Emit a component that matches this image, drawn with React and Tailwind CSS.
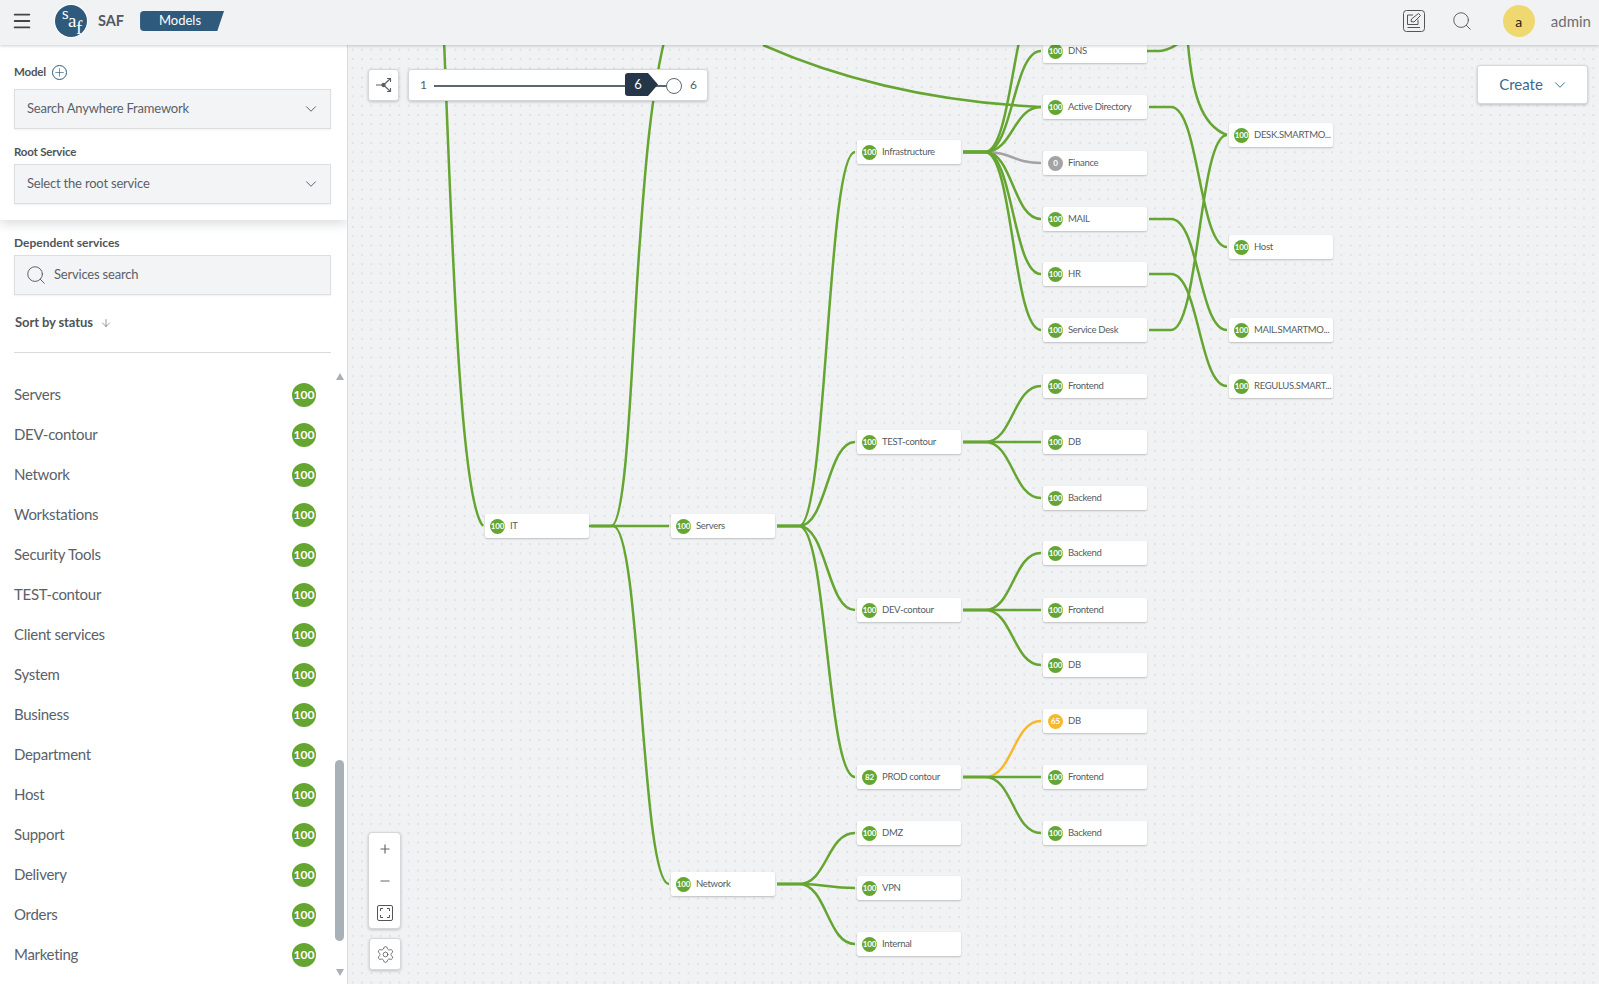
import { Menu, Plus, Minus, ChevronDown, Search, ArrowDown, Settings } from 'lucide-react';

const FONT = "font-['Lato',sans-serif]";

const services = ['Servers', 'DEV-contour', 'Network', 'Workstations', 'Security Tools', 'TEST-contour', 'Client services', 'System', 'Business', 'Department', 'Host', 'Support', 'Delivery', 'Orders', 'Marketing'];

const X = [485, 671, 857, 1043, 1229];
const W = 104;

const nodes = [
  { c: 0, y: 526, label: 'IT' },
  { c: 1, y: 526, label: 'Servers' },
  { c: 1, y: 884, label: 'Network' },
  { c: 2, y: 152, label: 'Infrastructure' },
  { c: 2, y: 442, label: 'TEST-contour' },
  { c: 2, y: 610, label: 'DEV-contour' },
  { c: 2, y: 777, label: 'PROD contour', v: 82 },
  { c: 2, y: 833, label: 'DMZ' },
  { c: 2, y: 888, label: 'VPN' },
  { c: 2, y: 944, label: 'Internal' },
  { c: 3, y: 51, label: 'DNS' },
  { c: 3, y: 107, label: 'Active Directory' },
  { c: 3, y: 163, label: 'Finance', v: 0 },
  { c: 3, y: 219, label: 'MAIL' },
  { c: 3, y: 274, label: 'HR' },
  { c: 3, y: 330, label: 'Service Desk' },
  { c: 3, y: 386, label: 'Frontend' },
  { c: 3, y: 442, label: 'DB' },
  { c: 3, y: 498, label: 'Backend' },
  { c: 3, y: 553, label: 'Backend' },
  { c: 3, y: 610, label: 'Frontend' },
  { c: 3, y: 665, label: 'DB' },
  { c: 3, y: 721, label: 'DB', v: 65 },
  { c: 3, y: 777, label: 'Frontend' },
  { c: 3, y: 833, label: 'Backend' },
  { c: 4, y: 135, label: 'DESK.SMARTMO...' },
  { c: 4, y: 247, label: 'Host' },
  { c: 4, y: 330, label: 'MAIL.SMARTMO...' },
  { c: 4, y: 386, label: 'REGULUS.SMART...' },
];

// source column, source y, target column, target y
const links = [
  [0, 526, 1, 526],
  [0, 526, 1, 884],
  [1, 526, 2, 152],
  [1, 526, 2, 442],
  [1, 526, 2, 610],
  [1, 526, 2, 777],
  [1, 884, 2, 833],
  [1, 884, 2, 888],
  [1, 884, 2, 944],
  [2, 152, 3, 51],
  [2, 152, 3, -5],
  [2, 152, 3, 107],
  [2, 152, 3, 219],
  [2, 152, 3, 274],
  [2, 152, 3, 330],
  [2, 442, 3, 386],
  [2, 442, 3, 442],
  [2, 442, 3, 498],
  [2, 610, 3, 553],
  [2, 610, 3, 610],
  [2, 610, 3, 665],
  [2, 777, 3, 777],
  [2, 777, 3, 833],
  [3, 107, 4, 247],
  [3, 219, 4, 330],
  [3, 274, 4, 386],
  [3, 330, 4, 135],
];

const linkPath = ([c1, y1, c2, y2]) => {
  const sx = X[c1] + W + 2;
  const tx = X[c2] - 2;
  const bx = sx + 22;
  const mx = (bx + tx) / 2;
  return `M${sx} ${y1} L${bx} ${y1} C${mx} ${y1} ${mx} ${y2} ${tx} ${y2}`;
};

const badgeColor = (v) => {
  if (v === 0) return 'bg-[#a3a3a5]';
  if (v === 65) return 'bg-[#f6b92e]';
  return 'bg-[#65a531]';
};

const GraphNode = ({ node }) => {
  const v = node.v === undefined ? 100 : node.v;
  return (
    <div className="absolute flex h-6 w-[104px] items-center rounded-[2px] bg-white pl-[5px] shadow-[0_1px_2px_rgba(0,0,0,0.22)]" style={{ left: X[node.c], top: node.y - 12 }}>
      <span className={`flex h-[15px] w-[15px] shrink-0 items-center justify-center rounded-full text-[8px] font-bold tracking-[-0.2px] text-white ${badgeColor(v)}`}>{v}</span>
      <span className="ml-[5px] whitespace-nowrap text-[9.5px] tracking-[-0.3px] text-[#555c63]">{node.label}</span>
    </div>
  );
};

const SelectBox = ({ text, className }) => (
  <div className={`flex h-10 items-center justify-between border border-[#dcdee1] bg-[#f3f4f6] pl-3 pr-[10px] text-[13px] tracking-[-0.2px] text-[#5b6168] shadow-[0_1px_2px_rgba(0,0,0,0.06)] ${className}`}>
    <span className="pb-px">{text}</span>
    <ChevronDown size={18} strokeWidth={1.2} color="#50565c" />
  </div>
);

export default function App() {
  return (
    <div className={`flex h-[984px] w-[1599px] flex-col overflow-hidden bg-[#f1f2f4] ${FONT}`}>
      <header className="relative z-20 flex h-[45px] shrink-0 items-center bg-[#f1f2f4] pb-[3px] shadow-[0_1px_3px_rgba(0,0,0,0.2)]">
        <Menu size={22} strokeWidth={2} color="#444" className="ml-[11px]" />
        <div className="relative ml-[22px] h-[32px] w-[32px] overflow-hidden rounded-full bg-[#2f5a7c] shadow-[0_0_0_1px_#fff]">
          <span className="absolute left-[7px] top-[-1px] font-['Liberation_Serif',serif] text-[17px] leading-5 text-white">s</span>
          <span className="absolute left-[13px] top-[6px] font-['Liberation_Serif',serif] text-[19px] leading-5 text-white">a</span>
          <span className="absolute left-[21px] top-[13px] font-['Liberation_Serif',serif] text-[19px] leading-5 text-white">f</span>
        </div>
        <span className="ml-[11px] text-[14.5px] font-bold text-[#55585c]">SAF</span>
        <div className="ml-[16px] flex h-5 w-[84px] items-center justify-center rounded-l-[4px] bg-[#2f5a7c] pr-1 text-[13px] text-white [clip-path:polygon(0_0,100%_0,92%_100%,0_100%)]">Models</div>
        <div className="ml-auto flex items-center">
          <svg width="22" height="22" viewBox="0 0 22 22" fill="none" stroke="#555" strokeWidth="1">
            <rect x="0.5" y="0.5" width="21" height="21" rx="3" />
            <path d="M10 5H4.5V14.5H15V9.5" />
            <path d="M8 11.5L8.5 9L15.5 3.5L17.5 5.5L11 12Z" />
            <path d="M4.5 17.5H17" />
          </svg>
          <Search size={22} strokeWidth={1} color="#555" className="ml-[26px]" />
          <div className="ml-[30px] flex h-8 w-8 items-center justify-center rounded-full bg-[#f0d870] text-[14px] text-[#222]">a</div>
          <span className="ml-4 mr-2 text-[15px] text-[#6b6f73]">admin</span>
        </div>
      </header>

      <div className="flex min-h-0 flex-1">
        <aside className="relative flex w-[348px] shrink-0 flex-col overflow-hidden border-r border-[#d8dade] bg-white">
          <section className="relative z-10 h-[175px] shrink-0 pl-[14px] pr-4 pt-[19px] shadow-[0_4px_10px_rgba(40,50,70,0.16)]">
            <div className="flex h-4 items-center gap-[6px] text-[11.5px] font-bold tracking-[-0.2px] text-[#4f5459]">
              Model
              <span className="flex h-[15px] w-[15px] items-center justify-center rounded-full border border-[#2f5a7c]">
                <Plus size={13} strokeWidth={1.2} color="#2f5a7c" />
              </span>
            </div>
            <SelectBox text="Search Anywhere Framework" className="mt-[9px]" />
            <div className="mt-[15px] h-4 text-[11.5px] font-bold leading-4 tracking-[-0.2px] text-[#4f5459]">Root Service</div>
            <SelectBox text="Select the root service" className="mt-1" />
          </section>

          <section className="pl-[14px] pr-4 pt-[15px]">
            <div className="h-4 text-[12px] font-bold leading-4 text-[#4f5459]">Dependent services</div>
            <div className="mt-1 flex h-10 items-center border border-[#dcdee1] bg-[#f3f4f6] pl-[10px] text-[13px] tracking-[-0.2px] text-[#5b6168] shadow-[0_1px_2px_rgba(0,0,0,0.06)]">
              <Search size={22} strokeWidth={1} color="#50565c" />
              <span className="ml-[7px] pb-px">Services search</span>
            </div>
            <div className="mt-[18px] flex h-5 items-center gap-[7px] pl-px text-[13px] font-bold tracking-[-0.1px] text-[#50555a]">
              Sort by status
              <ArrowDown size={12} strokeWidth={1.2} color="#555" />
            </div>
            <div className="mt-[19px] h-px bg-[#d8dade]" />
          </section>

          <ul className="mt-[22px] pl-[14px] pr-4">
            {services.map((name) => (
              <li key={name} className="flex h-10 items-center justify-between pr-[15px] text-[15px] tracking-[-0.3px] text-[#5b6168]">
                <span className="pb-[2px]">{name}</span>
                <span className="flex h-6 w-6 items-center justify-center rounded-full bg-[#65a531] text-[12px] font-bold tracking-normal text-white">100</span>
              </li>
            ))}
          </ul>

          {/* custom scrollbar */}
          <div className="absolute right-[3px] top-[328px] h-0 w-0 border-x-[4.5px] border-b-[7px] border-x-transparent border-b-[#a9b1b8]" />
          <div className="absolute right-[3px] top-[715px] h-[181px] w-[9px] rounded-full bg-[#a9b1b8]" />
          <div className="absolute right-[3px] top-[924px] h-0 w-0 border-x-[4.5px] border-t-[7px] border-x-transparent border-t-[#a9b1b8]" />
        </aside>

        <main className="relative min-w-0 flex-1 overflow-hidden bg-[#f1f2f4] bg-[radial-gradient(circle,#c9cbcf_0.55px,transparent_0.75px)] bg-[size:9.33px_9.33px]">
          {/* canvas uses page coordinates shifted by header and sidebar */}
          <div className="absolute left-[-348px] top-[-45px] h-[984px] w-[1599px]">
            <svg width="1599" height="984" className="absolute left-0 top-0" fill="none">
              <path d={linkPath([2, 152, 3, 163])} stroke="#a3a3a5" strokeWidth="2.5" />
              <path d={linkPath([2, 777, 3, 721])} stroke="#f6b92e" strokeWidth="2.5" />
              <g stroke="#65a531" strokeWidth="2.5">
                {links.map((l, i) => (
                  <path key={i} d={linkPath(l)} />
                ))}
                <path d="M589 526 L611 526 C628 526 632 340 640 240 C645 170 651 90 667 30" />
                <path d="M444 40 C452 240 460 500 483 526" />
                <path d="M1147 51 L1158 51 C1168 51 1172 47 1178 44" />
                <path d="M763 45 C860 88 960 103 1041 107" />
                <path d="M1188 44 C1192 90 1200 125 1227 135" />
              </g>
            </svg>
            {nodes.map((n, i) => (
              <GraphNode key={i} node={n} />
            ))}
          </div>

          <button className="absolute left-[20px] top-6 flex h-[32px] w-[31px] items-center justify-center rounded-[3px] border border-[#d5d7da] bg-white shadow-[0_1px_3px_rgba(0,0,0,0.2)]">
            <svg width="18" height="18" viewBox="0 0 18 18" fill="none" stroke="#5a5f64" strokeWidth="1.1">
              <path d="M1 9h7.5M8.5 9l7-6.5M8.5 9l7 6.5" />
              <path d="M12 2.5h3.5V6M15.5 12v3.5H12" />
              <circle cx="8.5" cy="9" r="1.6" fill="#5a5f64" />
            </svg>
          </button>

          <div className="absolute left-[60px] top-6 flex h-[32px] w-[300px] items-center rounded-[3px] border border-[#d5d7da] bg-white text-[12px] text-[#555c63] shadow-[0_1px_3px_rgba(0,0,0,0.2)]">
            <span className="absolute left-[11px]">1</span>
            <div className="absolute left-[25px] top-[15px] h-[2px] w-[233px] bg-[#5a6672]" />
            <div className="absolute left-[216px] top-[3px] flex h-[23px] w-[32px] items-center justify-center text-[13px] text-white">
              <svg width="33" height="23" viewBox="0 0 33 23" className="absolute left-0 top-0">
                <path d="M3 0H23L33 11.5L23 23H3Q0 23 0 20V3Q0 0 3 0Z" fill="#243648" />
              </svg>
              <span className="relative pr-[6px]">6</span>
            </div>
            <div className="absolute left-[257px] top-[8px] h-4 w-4 rounded-full border-[1.5px] border-[#5a6672] bg-white" />
            <span className="absolute left-[281px]">6</span>
          </div>

          <button className="absolute right-[11px] top-5 flex h-[39px] w-[111px] items-center justify-center gap-2 rounded-[3px] border border-[#d5d7da] bg-white pl-[3px] text-[15px] text-[#3a6a8f] shadow-[0_1px_3px_rgba(0,0,0,0.2)]">
            Create
            <ChevronDown size={18} strokeWidth={1.3} color="#3a6a8f" />
          </button>

          <div className="absolute left-[20px] top-[787px] flex h-[97px] w-[33px] flex-col items-center rounded-[4px] border border-[#d5d7da] bg-white shadow-[0_1px_3px_rgba(0,0,0,0.2)]">
            <Plus size={14} strokeWidth={2} color="#666" className="mt-[9px]" />
            <Minus size={14} strokeWidth={2} color="#666" className="mt-[18px]" />
            <svg width="16" height="16" viewBox="0 0 16 16" fill="none" stroke="#555" strokeWidth="1" className="mt-[17px]">
              <rect x="0.5" y="0.5" width="15" height="15" rx="1.5" />
              <path d="M3.5 6V3.5H6M10 3.5h2.5V6M12.5 10v2.5H10M6 12.5H3.5V10" />
            </svg>
          </div>

          <button className="absolute left-[21px] top-[893px] flex h-[32px] w-[32px] items-center justify-center rounded-[3px] border border-[#d5d7da] bg-white shadow-[0_1px_3px_rgba(0,0,0,0.2)]">
            <Settings size={19} strokeWidth={1} color="#555" />
          </button>
        </main>
      </div>
    </div>
  );
}
